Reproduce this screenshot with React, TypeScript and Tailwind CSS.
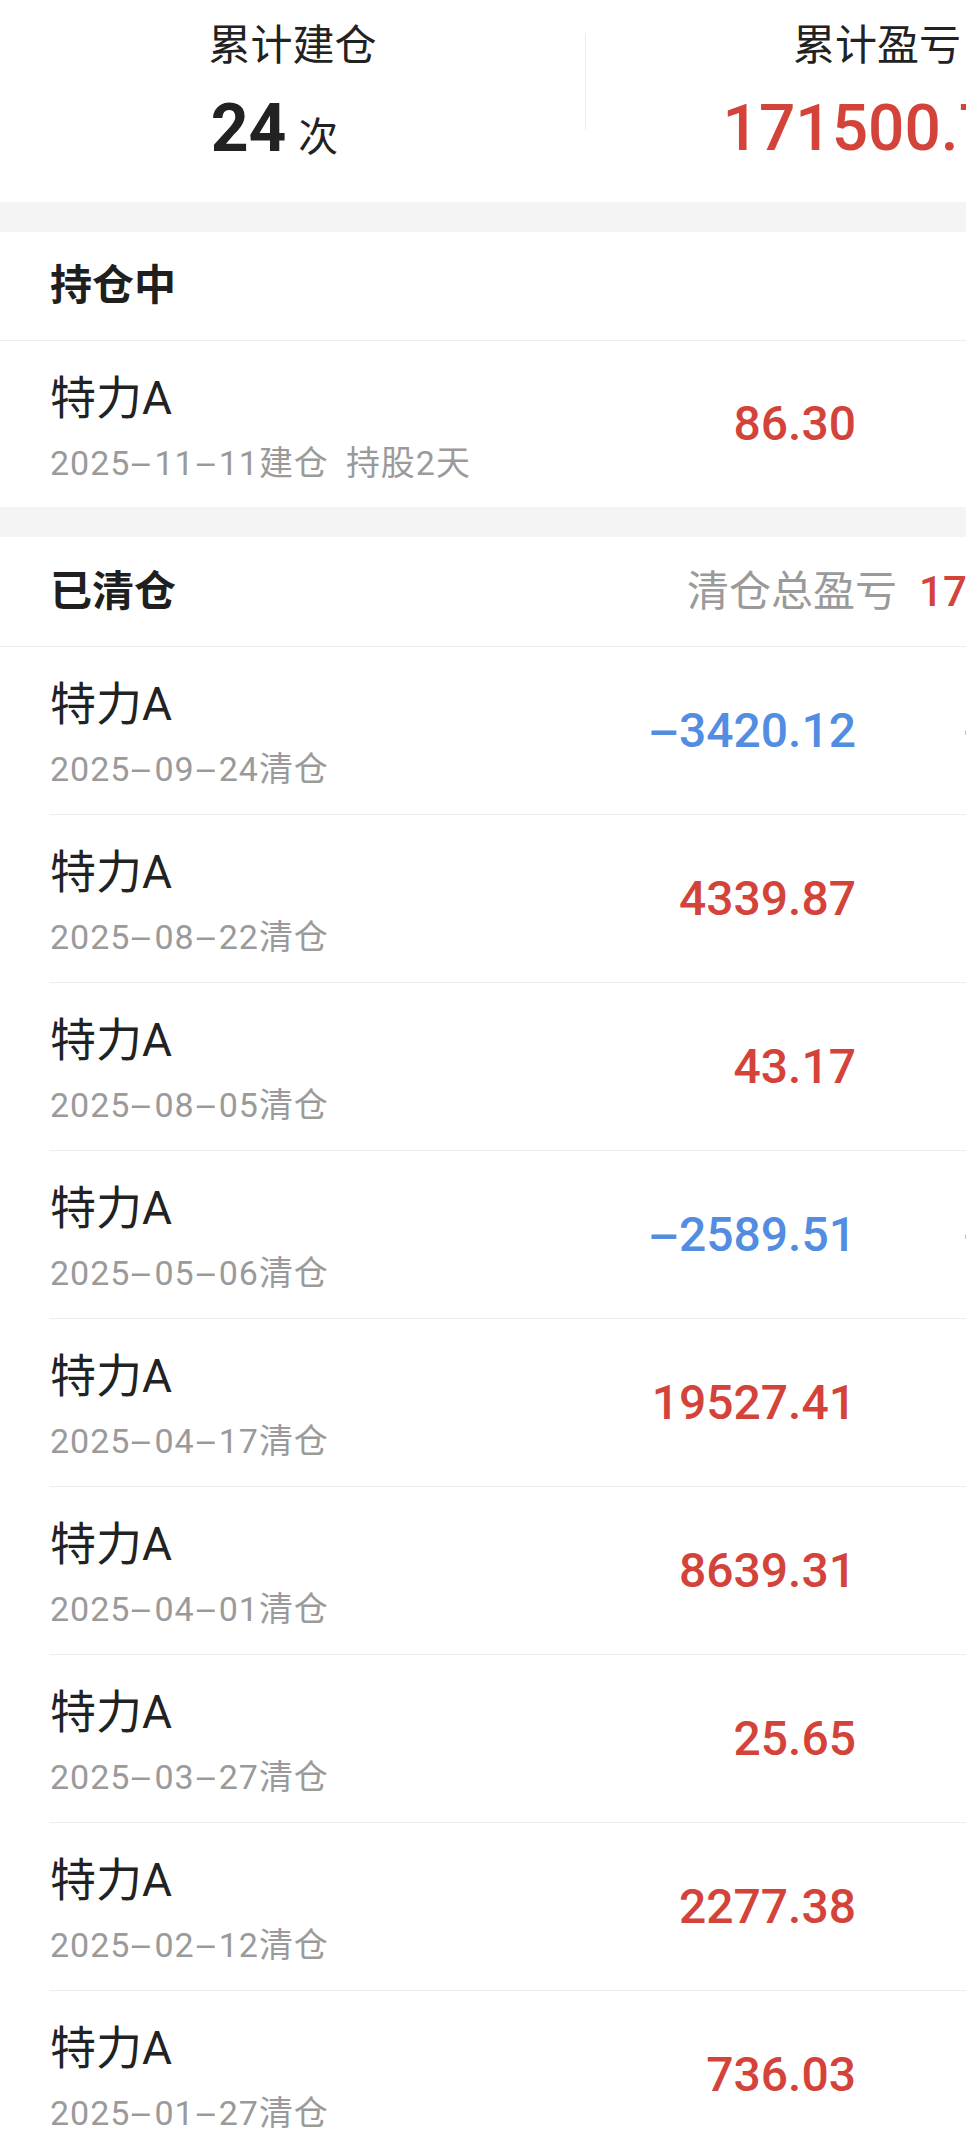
import React from "react";

const RED = "text-[#d3433a]";
const BLUE = "text-[#528de2]";

function Dashed({ text, variant }: { text: string; variant: "date" | "value" }) {
  const parts = text.split("-");
  const out: React.ReactNode[] = [];
  parts.forEach((p, i) => {
    if (i > 0) {
      out.push(
        variant === "date" ? (
          <span key={"d" + i} className="inline-block w-[24px] text-center scale-x-[2.2]">
            -
          </span>
        ) : (
          <span key={"d" + i} className="inline-block w-[30px] text-center scale-x-[2]">
            -
          </span>
        )
      );
    }
    if (p) out.push(<React.Fragment key={"p" + i}>{p}</React.Fragment>);
  });
  return <>{out}</>;
}

type Item = { date: string; value: string; pct: string };

const cleared: Item[] = [
  { date: "2025-09-24", value: "-3420.12", pct: "-13.21%" },
  { date: "2025-08-22", value: "4339.87", pct: "18.36%" },
  { date: "2025-08-05", value: "43.17", pct: "0.21%" },
  { date: "2025-05-06", value: "-2589.51", pct: "-10.47%" },
  { date: "2025-04-17", value: "19527.41", pct: "115.62%" },
  { date: "2025-04-01", value: "8639.31", pct: "42.87%" },
  { date: "2025-03-27", value: "25.65", pct: "0.13%" },
  { date: "2025-02-12", value: "2277.38", pct: "11.05%" },
  { date: "2025-01-27", value: "736.03", pct: "3.68%" },
  { date: "2025-01-08", value: "1203.56", pct: "6.02%" },
];

function ClearedRow({ item }: { item: Item }) {
  const neg = item.value.startsWith("-");
  const color = neg ? BLUE : RED;
  return (
    <div className="ml-[49px] h-[168px] border-b border-[#ededed] flex">
      <div className="w-[501px] pl-[1px] pt-[34px]">
        <div className="text-[46px] leading-[46px] text-[#222222]">特力A</div>
        <div className="mt-[25px] text-[34px] leading-[34px] tracking-[1px] text-[#9a9a9a] whitespace-nowrap">
          <Dashed text={item.date} variant="date" />
          清仓
        </div>
      </div>
      <div className={`w-[306px] flex items-center justify-end text-[48px] leading-none font-medium whitespace-nowrap ${color}`}>
        <Dashed text={item.value} variant="value" />
      </div>
      <div className={`w-[295px] flex items-center justify-end text-[48px] leading-none font-medium whitespace-nowrap ${color}`}>
        <Dashed text={item.pct} variant="value" />
      </div>
    </div>
  );
}

export default function App() {
  return (
    <div className="w-[966px] h-[2132px] overflow-hidden bg-white font-[family-name:Roboto,'Noto_Sans_CJK_SC',sans-serif]">
      <div className="w-[1200px]">
        {/* Summary header */}
        <div className="h-[202px] flex">
          <div className="w-[585px] flex flex-col items-center pt-[25px]">
            <div className="text-[42px] leading-[42px] text-[#222222]">累计建仓</div>
            <div className="mt-[29px] mr-[36px] flex items-baseline gap-[12px]">
              <span className="text-[66px] leading-[66px] font-bold text-[#222222]">24</span>
              <span className="text-[40px] leading-[40px] text-[#222222]">次</span>
            </div>
          </div>
          <div className="w-px h-[97px] mt-[33px] bg-[#ececec]" />
          <div className="w-[582px] flex flex-col items-center pt-[25px]">
            <div className="text-[42px] leading-[42px] text-[#222222]">累计盈亏</div>
            <div className="mt-[29px] flex items-baseline">
              <span className={`text-[64px] leading-[66px] font-medium ${RED}`}>171500.75</span>
            </div>
          </div>
        </div>

        <div className="h-[30px] bg-[#f4f4f4]" />

        {/* Holding section */}
        <div className="h-[109px] border-b border-[#ededed] flex items-center pl-[50px]">
          <div className="text-[42px] leading-[42px] font-bold text-[#1f1f1f]">持仓中</div>
        </div>
        <div className="h-[166px] flex">
          <div className="w-[550px] pl-[50px] pt-[34px]">
            <div className="text-[46px] leading-[46px] text-[#222222]">特力A</div>
            <div className="mt-[25px] text-[34px] leading-[34px] tracking-[1px] text-[#9a9a9a] whitespace-nowrap">
              <Dashed text="2025-11-11" variant="date" />
              建仓<span className="ml-[17px]">持股2天</span>
            </div>
          </div>
          <div className={`w-[306px] flex items-center justify-end text-[48px] leading-none font-medium ${RED}`}>
            86.30
          </div>
          <div className={`w-[295px] flex items-center justify-end text-[48px] leading-none font-medium ${RED}`}>
            0.43%
          </div>
        </div>

        <div className="h-[30px] bg-[#f4f4f4]" />

        {/* Cleared section */}
        <div className="h-[110px] border-b border-[#ededed] flex items-center">
          <div className="w-[687px] pl-[50px] text-[42px] leading-[42px] font-bold text-[#1f1f1f]">已清仓</div>
          <div className="flex items-center gap-[22px] whitespace-nowrap">
            <span className="text-[42px] leading-[42px] text-[#9a9a9a]">清仓总盈亏</span>
            <span className={`text-[42px] leading-[42px] font-medium ${RED}`}>171414.45</span>
          </div>
        </div>

        {cleared.map((item, i) => (
          <ClearedRow key={i} item={item} />
        ))}
      </div>
    </div>
  );
}
